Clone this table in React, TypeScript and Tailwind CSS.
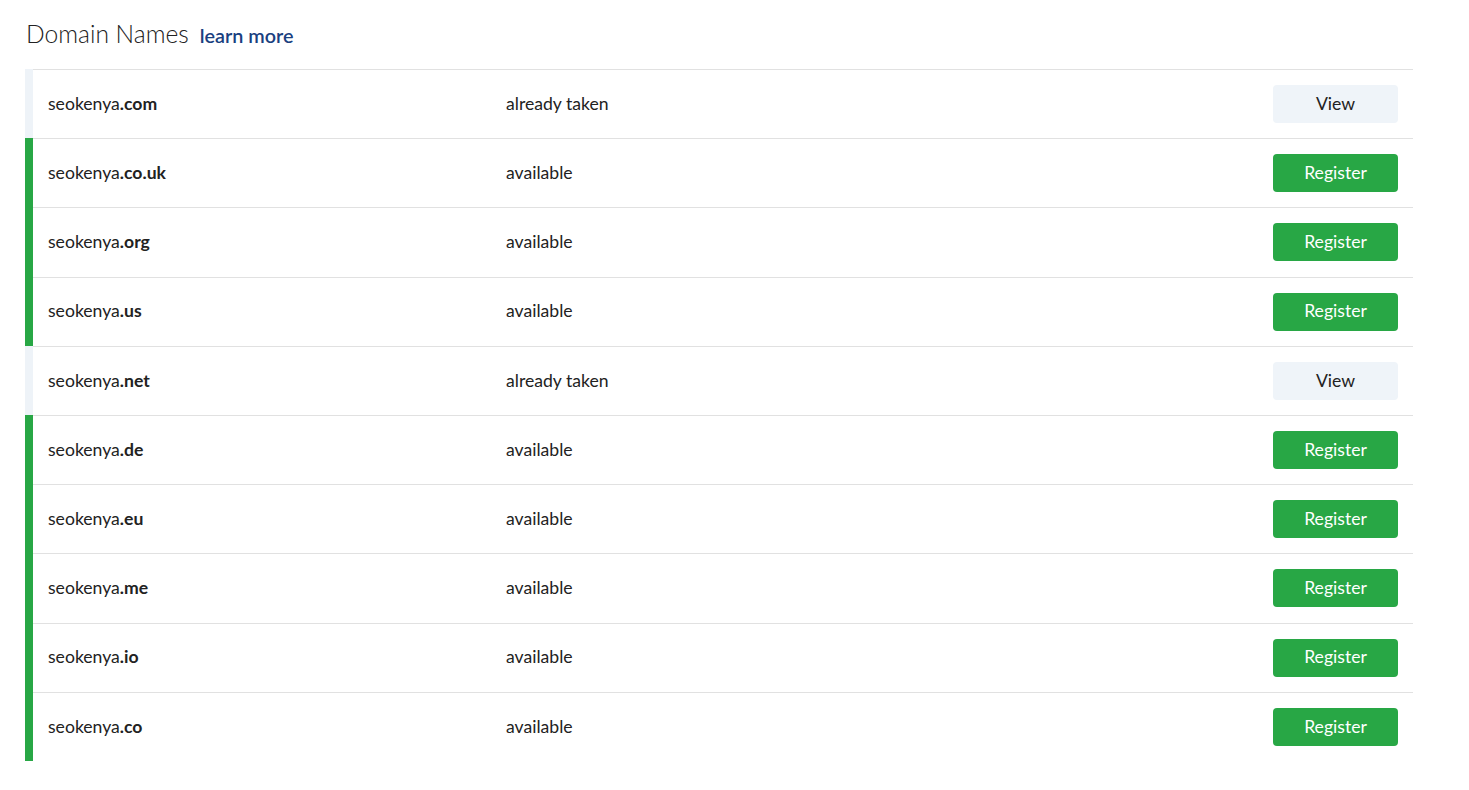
import React from "react";

interface Domain {
  name: string;
  tld: string;
  available: boolean;
}

const domains: Domain[] = [
  { name: "seokenya", tld: ".com", available: false },
  { name: "seokenya", tld: ".co.uk", available: true },
  { name: "seokenya", tld: ".org", available: true },
  { name: "seokenya", tld: ".us", available: true },
  { name: "seokenya", tld: ".net", available: false },
  { name: "seokenya", tld: ".de", available: true },
  { name: "seokenya", tld: ".eu", available: true },
  { name: "seokenya", tld: ".me", available: true },
  { name: "seokenya", tld: ".io", available: true },
  { name: "seokenya", tld: ".co", available: true },
];

function DomainRow({ d }: { d: Domain }) {
  return (
    <div className="flex h-[69.2px]">
      <div className={d.available ? "w-2 bg-[#28a745]" : "w-2 bg-[#eef3f8]"} />
      <div className="flex flex-1 items-center border-t border-[#e1e1e1] pl-[15px] pr-[15px]">
        <div className="w-[458px] text-[17.6px] text-[#222]">
          {d.name}
          <span className="font-bold">{d.tld}</span>
        </div>
        <div className="flex-1 text-[17.6px] text-[#222]">
          {d.available ? "available" : "already taken"}
        </div>
        {d.available ? (
          <button className="h-[38px] w-[125px] rounded-[4px] bg-[#28a745] text-[17.6px] text-white">
            Register
          </button>
        ) : (
          <button className="h-[38px] w-[125px] rounded-[4px] bg-[#eff4f9] text-[17.6px] text-[#222]">
            View
          </button>
        )}
      </div>
    </div>
  );
}

export default function App() {
  return (
    <div className="min-h-screen bg-white pl-[26px] pt-[16px] font-['Lato','Liberation_Sans',sans-serif]">
      <div className="flex items-baseline gap-[11px] h-[53px]">
        <h2 className="text-[24.6px] font-light text-[#222]">Domain Names</h2>
        <a className="text-[19.8px] font-semibold text-[#1a4080]">learn more</a>
      </div>
      <div className="-ml-px w-[1388px]">
        {domains.map((d) => (
          <DomainRow key={d.tld} d={d} />
        ))}
      </div>
    </div>
  );
}
